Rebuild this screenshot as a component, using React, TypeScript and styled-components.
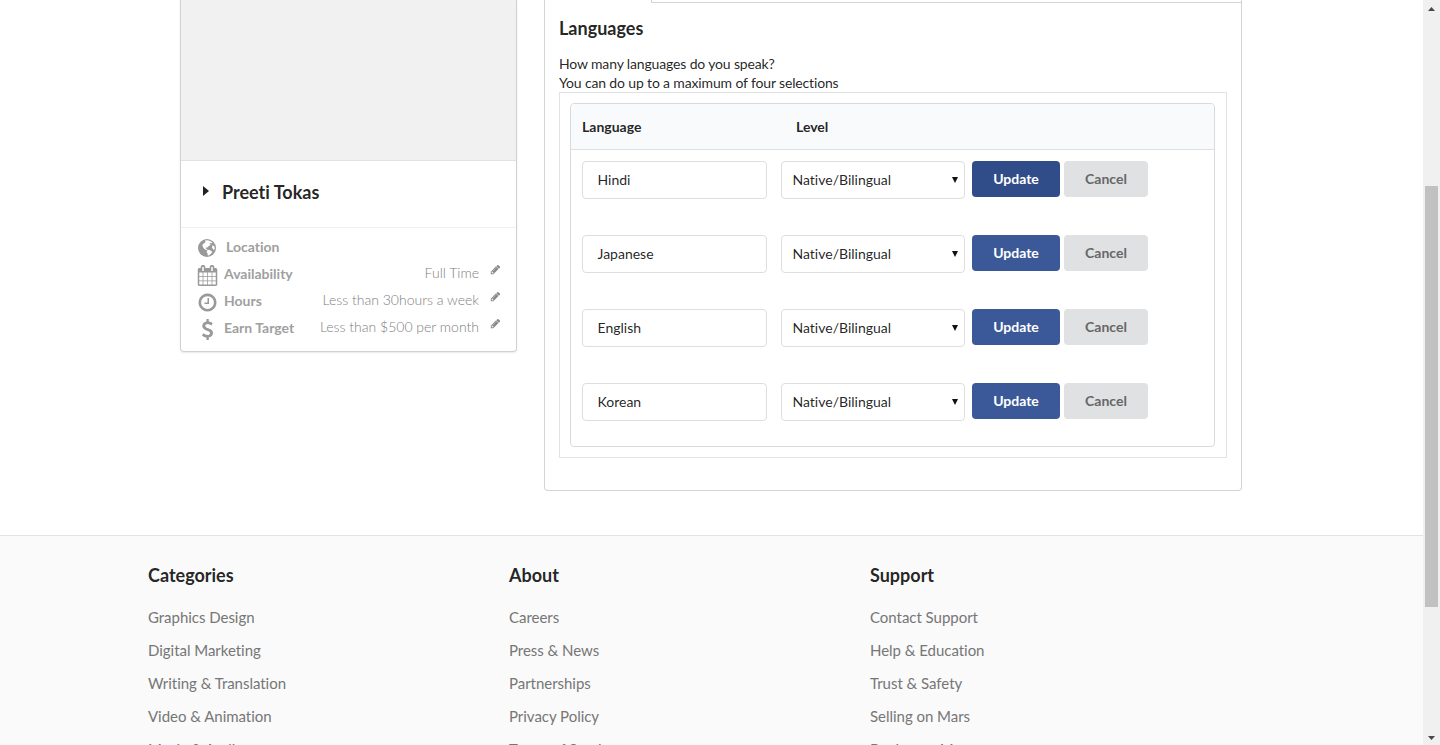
import React from 'react';
import styled, { createGlobalStyle } from 'styled-components';

const Global = createGlobalStyle`
  * { box-sizing: border-box; }
  body {
    margin: 0;
    overflow: hidden;
    background: #fff;
    color: rgba(0, 0, 0, 0.87);
    font: 14px/20px Lato, "Liberation Sans", sans-serif;
    font-variant-ligatures: none;
  }
  h3, h4, p, ul { margin: 0; padding: 0; }
`;

const Viewport = styled.div`
  display: flex;
  height: 745px;
  overflow: hidden;
`;
const Page = styled.div`
  flex: 1;
  min-width: 0;
`;
const Main = styled.main`
  display: flex;
  align-items: flex-start;
  gap: 27px;
  height: 535px;
  padding-left: 180px;
`;

const Card = styled.aside`
  width: 337px;
  height: 352px;
  border: 1px solid #d0d1d2;
  border-top: 0;
  border-radius: 0 0 4px 4px;
  box-shadow: 0 1px 2px rgba(34, 36, 38, 0.1);
`;
const Photo = styled.div`
  height: 161px;
  background: #f1f1f1;
  border-bottom: 1px solid #e2e2e2;
`;
const Name = styled.h3`
  display: flex;
  align-items: center;
  height: 67px;
  padding: 0 0 4px 22px;
  border-bottom: 1px solid #f0f0f0;
  font-size: 18px;
  font-weight: 700;
`;
const Caret = styled.span`
  width: 6px;
  height: 10px;
  margin: 0 13px 2px 0;
  background: #222;
  clip-path: polygon(0 0, 100% 50%, 0 100%);
`;
const Details = styled.ul`
  padding-top: 5px;
  list-style: none;
`;
const Detail = styled.li`
  display: flex;
  align-items: center;
  height: 27px;
  padding: 0 15px;
  color: #a0a0a0;
`;
const IconSlot = styled.span<{ $gap?: number }>`
  display: flex;
  justify-content: center;
  width: 22px;
  margin-right: ${(p) => p.$gap ?? 6}px;
  padding-top: 3px;
  color: #999;
`;
const Label = styled.b`
  flex: 1;
`;
const Value = styled.span`
  margin-top: -2px;
  font-weight: 300;
  color: #808080;
`;
const EditSlot = styled.span`
  display: flex;
  margin: -9px 0 0 11px;
  color: #888;
`;

const Panel = styled.section`
  width: 698px;
  height: 491px;
  border: solid #d4d4d5;
  border-width: 0 1px 1px;
  border-radius: 0 0 4px 4px;
`;
const TabEdge = styled.div`
  height: 3px;
  margin: 0 -1px 0 106px;
  border: solid #d4d4d5;
  border-width: 0 0 0 1px;
  background: linear-gradient(#d4d4d5, #d4d4d5) 0 2px / 100% 1px no-repeat;
`;
const PanelBody = styled.div`
  padding: 13px 14px 0;
`;
const Title = styled.h3`
  height: 38px;
  font-size: 18px;
  line-height: 24px;
`;
const Intro = styled.p`
  height: 38px;
  line-height: 19px;
  letter-spacing: -0.15px;
`;
const Frame = styled.div`
  width: 668px;
  height: 366px;
  padding: 10px;
  border: 1px solid #e1e2e3;
`;
const Table = styled.div`
  width: 645px;
  height: 344px;
  border: 1px solid #d9dadb;
  border-radius: 4px;
`;
const TableHead = styled.div`
  display: grid;
  grid-template-columns: 214px 1fr;
  align-items: center;
  height: 46px;
  padding: 0 11px;
  border-bottom: 1px solid #dedfdf;
  border-radius: 3px 3px 0 0;
  background: #f9fafb;
  font-weight: 700;
`;
const Row = styled.div`
  display: flex;
  align-items: flex-start;
  height: 74px;
  padding: 11px 0 0 11px;
`;
const Field = styled.div<{ $width: number; $pad: number; $gap: number }>`
  display: flex;
  align-items: center;
  justify-content: space-between;
  width: ${(p) => p.$width}px;
  height: 38px;
  margin-right: ${(p) => p.$gap}px;
  padding: 0 6px 0 ${(p) => p.$pad}px;
  border: 1px solid #dededf;
  border-radius: 4px;
`;
const Arrow = styled.span`
  width: 6px;
  height: 6px;
  background: #111;
  clip-path: polygon(0 0, 100% 0, 50% 100%);
`;
const Button = styled.button<{ $primary?: boolean; $active?: boolean }>`
  width: ${(p) => (p.$primary ? 88 : 84)}px;
  height: 36px;
  margin-right: 4px;
  padding: 0;
  border: 0;
  border-radius: 4px;
  background: ${(p) => (p.$active ? '#304d8a' : p.$primary ? '#3b5998' : '#e0e1e2')};
  color: ${(p) => (p.$primary ? '#fff' : '#666768')};
  font: 700 14px/14px Lato, sans-serif;
`;

const Footer = styled.footer`
  display: grid;
  grid-template-columns: repeat(3, 361px);
  height: 210px;
  padding: 27px 0 0 148px;
  overflow: hidden;
  border-top: 1px solid #e2e3e3;
  background: #fafafa;
`;
const FooterTitle = styled.h4`
  height: 38px;
  font-size: 18px;
  line-height: 25px;
`;
const FooterLink = styled.p`
  height: 33px;
  color: #767676;
  font-size: 15px;
  line-height: 33px;
  letter-spacing: -0.03px;
`;

const Scrollbar = styled.div`
  display: flex;
  flex-direction: column;
  align-items: center;
  justify-content: space-between;
  width: 17px;
  padding: 7px 0 5px;
  background: #f0f0f0;
`;
const ScrollArrow = styled.span<{ $down?: boolean }>`
  width: 7px;
  height: 4px;
  background: #484848;
  clip-path: ${(p) => (p.$down ? 'polygon(0 0, 100% 0, 50% 100%)' : 'polygon(50% 0, 100% 100%, 0 100%)')};
`;
const Thumb = styled.div`
  width: 13px;
  height: 421px;
  margin-bottom: -45px;
  background: #c1c1c1;
`;

const shapes = {
  calendar:
    'M192 1664h288v-288h-288v288zM544 1664h320v-288h-320v288zM192 1312h288v-320h-288v320zM544 1312h320v-320h-320v320zM192 928h288v-288h-288v288zM928 1664h320v-288h-320v288zM544 928h320v-288h-320v288zM1312 1664h288v-288h-288v288zM928 1312h320v-320h-320v320zM576 480v-288q0-13-9.5-22.5t-22.5-9.5h-64q-13 0-22.5 9.5t-9.5 22.5v288q0 13 9.5 22.5t22.5 9.5h64q13 0 22.5-9.5t9.5-22.5zM1312 1312h288v-320h-288v320zM928 928h320v-288h-320v288zM1312 928h288v-288h-288v288zM1344 480v-288q0-13-9.5-22.5t-22.5-9.5h-64q-13 0-22.5 9.5t-9.5 22.5v288q0 13 9.5 22.5t22.5 9.5h64q13 0 22.5-9.5t9.5-22.5zM1728 384v1280q0 52-38 90t-90 38h-1408q-52 0-90-38t-38-90v-1280q0-52 38-90t90-38h128v-96q0-66 47-113t113-47h64q66 0 113 47t47 113v96h384v-96q0-66 47-113t113-47h64q66 0 113 47t47 113v96h128q52 0 90 38t38 90z',
  clock:
    'M1024 544v448q0 14-9 23t-23 9h-320q-14 0-23-9t-9-23v-64q0-14 9-23t23-9h224v-352q0-14 9-23t23-9h64q14 0 23 9t9 23zM1440 896q0-148-73-273t-198-198-273-73-273 73-198 198-73 273 73 273 198 198 273 73 273-73 198-198 73-273zM1664 896q0 209-103 385.5t-279.5 279.5-385.5 103-385.5-103-279.5-279.5-103-385.5 103-385.5 279.5-279.5 385.5-103 385.5 103 279.5 279.5 103 385.5z',
  dollar:
    'M1362 1185q0 153-99.5 263.5t-258.5 136.5v175q0 14-9 23t-23 9h-135q-13 0-22.5-9.5t-9.5-22.5v-175q-66-9-127.5-31t-101.5-44.5-74-48-46.5-37.5-17.5-18q-17-21-2-41l103-135q7-10 23-12 15-2 24 9l2 2q113 99 243 125 37 8 74 8 81 0 142.5-43t61.5-122q0-28-15-53t-33.5-42-58.5-37.5-66-32-80-32.5q-39-16-61.5-25t-61.5-26.5-62.5-31-56.5-35.5-53.5-42.5-43.5-49-35.5-58-21-66.5-8.5-78q0-138 98-242t255-134v-180q0-13 9.5-22.5t22.5-9.5h135q14 0 23 9t9 23v176q57 6 110.5 23t87 33.5 63.5 37.5 39 29 15 14q17 18 5 38l-81 146q-8 15-23 16-14 3-27-7-3-3-14.5-12t-39-26.5-58.5-32-74.5-26-85.5-11.5q-95 0-155 43t-60 111q0 26 8.5 48t29.5 41.5 39.5 33 56 31 60.5 27 70 27.5q53 20 81 31.5t76 35 75.5 42.5 62 50 53 63.5 31.5 76.5 13 94z',
  pencil:
    'M491 1536l91-91-235-235-91 91v107h128v128h107zm523-928q0-22-22-22-10 0-17 7l-542 542q-7 7-7 17 0 22 22 22 10 0 17-7l542-542q7-7 7-17zm-54-192l416 416-832 832h-416v-416zm683 96q0 53-37 90l-166 166-416-416 166-165q36-38 90-38 53 0 91 38l235 234q37 39 37 91z',
};

function Icon({ shape, size }: { shape: keyof typeof shapes; size: number }) {
  return (
    <svg width={size} height={size} viewBox="0 0 1792 1792" fill="currentColor">
      <path d={shapes[shape]} />
    </svg>
  );
}

function Globe() {
  return (
    <svg width="18" height="18" viewBox="0 0 18 18">
      <circle cx="9" cy="9" r="9" fill="currentColor" />
      <path
        fill="#fff"
        d="M7 1.6 9.5 1.2 12.2 2 14.4 3.7 13.2 4.6 12.1 4 11.5 5 12.8 5.8 11.4 6.8 10.2 7.5 9.4 8.6 8 8.5 7.6 9.5 9 10.1 9.4 11 8.2 10.9 6.4 9.9 5.2 8.4 4.4 6.6 4.9 5 6.5 4.3 7.4 3z M9.2 11.3 11 10.8 13.5 11.9 14.3 12.9 13.1 14.5 11.6 16 9.8 16.8 9.6 14.6 8.6 13z M14.6 6.3 16.2 6.9 16.8 9.4 16 11 14.7 9.8 13.9 8.2z"
      />
    </svg>
  );
}

const details: { icon: 'calendar' | 'clock' | 'dollar'; label: string; value: string }[] = [
  { icon: 'calendar', label: 'Availability', value: 'Full Time' },
  { icon: 'clock', label: 'Hours', value: 'Less than 30hours a week' },
  { icon: 'dollar', label: 'Earn Target', value: 'Less than $500 per month' },
];
const languages = ['Hindi', 'Japanese', 'English', 'Korean'];
const footer = [
  { title: 'Categories', links: ['Graphics Design', 'Digital Marketing', 'Writing & Translation', 'Video & Animation', 'Music & Audio'] },
  { title: 'About', links: ['Careers', 'Press & News', 'Partnerships', 'Privacy Policy', 'Terms of Service'] },
  { title: 'Support', links: ['Contact Support', 'Help & Education', 'Trust & Safety', 'Selling on Mars', 'Buying on Mars'] },
];

export default function App() {
  return (
    <Viewport>
      <Global />
      <Page>
        <Main>
          <Card>
            <Photo />
            <Name><Caret />Preeti Tokas</Name>
            <Details>
              <Detail>
                <IconSlot $gap={8}><Globe /></IconSlot>
                <Label>Location</Label>
              </Detail>
              {details.map((d) => (
                <Detail key={d.label}>
                  <IconSlot><Icon shape={d.icon} size={21} /></IconSlot>
                  <Label>{d.label}</Label>
                  <Value>{d.value}</Value>
                  <EditSlot><Icon shape="pencil" size={11} /></EditSlot>
                </Detail>
              ))}
            </Details>
          </Card>
          <Panel>
            <TabEdge />
            <PanelBody>
              <Title>Languages</Title>
              <Intro>How many languages do you speak?<br />You can do up to a maximum of four selections</Intro>
              <Frame>
                <Table>
                  <TableHead><span>Language</span><span>Level</span></TableHead>
                  {languages.map((l, i) => (
                    <Row key={l}>
                      <Field $width={185} $pad={14.5} $gap={14}>{l}</Field>
                      <Field $width={184} $pad={10.5} $gap={7}>Native/Bilingual<Arrow /></Field>
                      <Button $primary $active={i === 0}>Update</Button>
                      <Button>Cancel</Button>
                    </Row>
                  ))}
                </Table>
              </Frame>
            </PanelBody>
          </Panel>
        </Main>
        <Footer>
          {footer.map((c) => (
            <div key={c.title}>
              <FooterTitle>{c.title}</FooterTitle>
              {c.links.map((l) => <FooterLink key={l}>{l}</FooterLink>)}
            </div>
          ))}
        </Footer>
      </Page>
      <Scrollbar>
        <ScrollArrow />
        <Thumb />
        <ScrollArrow $down />
      </Scrollbar>
    </Viewport>
  );
}
